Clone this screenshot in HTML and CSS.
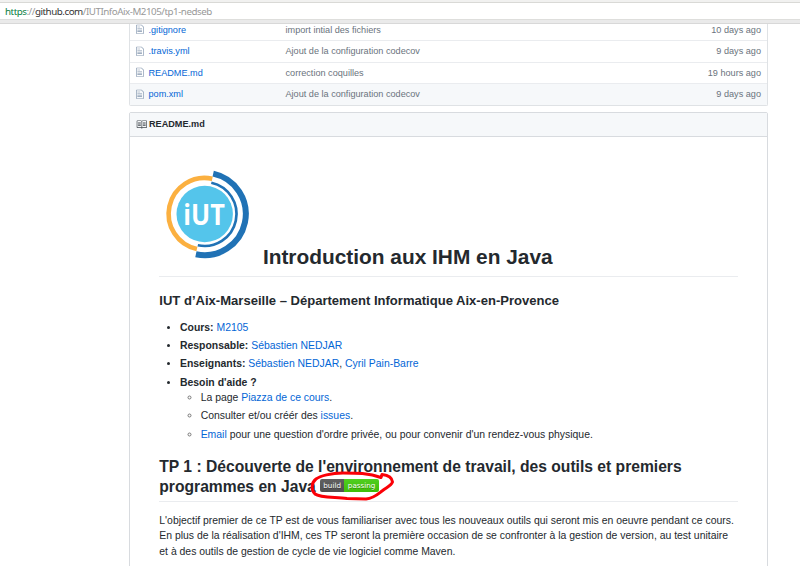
FILE: index.html
```html
<!DOCTYPE html>
<html lang="fr">
<head>
<meta charset="utf-8">
<title>tp1-nedseb</title>
<link rel="stylesheet" href="styles.css">
</head>
<body>
<svg class="defs" width="0" height="0"><defs>
<symbol id="file" viewBox="0 0 12 16"><path fill-rule="evenodd" d="M6 5H2V4h4v1zM2 8h7V7H2v1zm0 2h7V9H2v1zm0 2h7v-1H2v1zm10-7.500V14c0 .55-.45 1-1 1H1c-.55 0-1-.45-1-1V2c0-.55.45-1 1-1h7.500L12 4.500zM11 5L8 2H1v12h10V5z"/></symbol>
</defs></svg>
<header class="address"><span class="secure">https</span>://<span class="host">github.com</span>/IUTInfoAix-M2105/tp1-nedseb</header>
<main class="container">
  <div class="files">
    <div class="row"><svg class="icon"><use href="#file"/></svg><a class="name">.gitignore</a><span class="message">import intial des fichiers</span><span class="age">10 days ago</span></div>
    <div class="row"><svg class="icon"><use href="#file"/></svg><a class="name">.travis.yml</a><span class="message">Ajout de la configuration codecov</span><span class="age">9 days ago</span></div>
    <div class="row"><svg class="icon"><use href="#file"/></svg><a class="name">README.md</a><span class="message">correction coquilles</span><span class="age">19 hours ago</span></div>
    <div class="row current"><svg class="icon"><use href="#file"/></svg><a class="name">pom.xml</a><span class="message">Ajout de la configuration codecov</span><span class="age">9 days ago</span></div>
  </div>
  <section class="readme">
    <div class="readme-title"><svg class="book" viewBox="0 0 16 16"><path fill-rule="evenodd" d="M3 5h4v1H3V5zm0 3h4V7H3v1zm0 2h4V9H3v1zm11-5h-4v1h4V5zm0 2h-4v1h4V7zm0 2h-4v1h4V9zm2-6v9c0 .55-.45 1-1 1H9.500l-1 1-1-1H2c-.55 0-1-.45-1-1V3c0-.55.45-1 1-1h5.500l1 1 1-1H15c.55 0 1 .45 1 1zm-8 .5L7.500 3H2v9h6V3.500zm7-.5H9.500l-.5.500V12h6V3z"/></svg>README.md</div>
    <article class="markdown">
      <h1><svg class="logo" viewBox="0 0 97.8 97.8">
        <circle cx="45.700" cy="48" r="28.200" fill="#54c5eb"/>
        <path d="M53.300 12.800A35.500 35.500 0 0 0 37.900 83.100" fill="none" stroke="#fbb040" stroke-width="4.600"/>
        <path d="M54.200 7.600A41 41 0 0 1 36.900 88.300" fill="none" stroke="#2072b5" stroke-width="6"/>
        <path d="M52.300 16.700A31.500 31.500 0 0 1 38.800 79.200" fill="none" stroke="#2072b5" stroke-width="2.700"/>
        <text class="logo-text" x="24.300" y="58.600" textLength="41.500" lengthAdjust="spacingAndGlyphs">iUT</text>
      </svg> Introduction aux IHM en Java</h1>
      <h3>IUT d’Aix-Marseille – Département Informatique Aix-en-Provence</h3>
      <ul>
        <li><strong>Cours:</strong> <a>M2105</a></li>
        <li><strong>Responsable:</strong> <a>Sébastien NEDJAR</a></li>
        <li><strong>Enseignants:</strong> <a>Sébastien NEDJAR</a>, <a>Cyril Pain-Barre</a></li>
        <li><strong>Besoin d'aide ?</strong>
          <ul>
            <li>La page <a>Piazza de ce cours</a>.</li>
            <li>Consulter et/ou créér des <a>issues</a>.</li>
            <li><a>Email</a> pour une question d'ordre privée, ou pour convenir d'un rendez-vous physique.</li>
          </ul>
        </li>
      </ul>
      <h2>TP 1 : Découverte de l'environnement de travail, des outils et premiers<br>programmes en Java <span class="badge-wrap"><span class="badge"><span class="subject">build</span><span class="status">passing</span></span><svg class="scribble" viewBox="0 0 88 34"><path d="M72 8.500C60 4 47 4 34 4C22 4 11 7 7 10C2 14 2 21 6 25C11 29 26 28 38 29.500L57 30C65 29 69 25 73 22C78 18 82 17 83.500 13C83 8 78 6 73 5.500L72 8.500"/></svg></span></h2>
      <p>L'objectif premier de ce TP est de vous familiariser avec tous les nouveaux outils qui seront mis en oeuvre pendant ce cours.<br>En plus de la réalisation d'IHM, ces TP seront la première occasion de se confronter à la gestion de version, au test unitaire<br>et à des outils de gestion de cycle de vie logiciel comme Maven.</p>
    </article>
  </section>
</main>
</body>
</html>
```
FILE: styles.css
```css
* { box-sizing: border-box; }
body {
  margin: 0;
  height: 566px;
  overflow: hidden;
  background: #fff;
  color: #24292e;
  font: 10.43px/15.65px "Liberation Sans", Arial, sans-serif;
}
a { color: #0366d6; }
.defs { position: absolute; }
.address {
  height: 24px;
  padding: 3px 5px 0;
  background: linear-gradient(#f1f1f0 2px, #d9d9d6 2px 3px, #fff 3px 19px, #dededc 19px 20px, #eaeaea 20px 23px, #d8d8d8 23px);
  font: 9.8px/17px "Noto Sans", sans-serif;
  letter-spacing: -.48px;
  color: #999;
  white-space: nowrap;
}
.secure { color: #0b8043; }
.host { color: #333; }
.container { width: 639px; margin-left: 129px; }
.files {
  height: 81.5px;
  border: 1px solid #dfe2e5;
  border-top: 0;
  border-radius: 0 0 2px 2px;
  display: flex;
  flex-direction: column;
  justify-content: flex-end;
  overflow: hidden;
  font-size: 9.13px;
}
.row {
  display: flex;
  flex: none;
  align-items: center;
  height: 21.5px;
  padding: 2px 6px 0;
  border-top: 1px solid #eaecef;
  color: #6a737d;
}
.row.current { background: #f6f8fa; }
.icon { width: 8px; height: 10.5px; margin: -3px 4.5px 0 0; fill: #8295ad; }
.name { width: 137px; }
.age { margin-left: auto; }
.readme {
  margin-top: 6px;
  border: 1px solid #d8dbdf;
  border-radius: 2px 2px 0 0;
}
.readme-title {
  display: flex;
  align-items: center;
  height: 24.3px;
  padding: 1px 0 0 6px;
  background: #f6f8fa;
  border-bottom: 1px solid #d8dbdf;
  font-size: 9.13px;
  font-weight: 700;
}
.book { width: 11px; height: 11px; margin: -1px 2px 0 0; fill: #444a50; }
.markdown { padding: 29px 29.3px; }
h1, h2, h3 { margin: 15.65px 0 10.43px; line-height: 1.25; white-space: nowrap; }
h1, h2 { padding-bottom: .3em; border-bottom: 1px solid #eaecef; }
h1 { margin-top: 0; padding-bottom: 5.9px; font-size: 20.86px; }
h2 { margin: 14.8px 0 11.1px; padding-bottom: 4.3px; font-size: 15.65px; }
h3 { margin: 16.1px 0 10.8px; font-size: 13.06px; }
.logo { width: 97.8px; height: 97.8px; vertical-align: baseline; }
.logo-text { font: 700 28px "Open Sans", sans-serif; fill: #fff; }
ul { margin: 0 0 10.43px; padding-left: 20.7px; }
ul ul { margin: 0; }
ul ul li::marker { color: #777; }
li + li { margin-top: 2.61px; }
p { margin: 0; white-space: nowrap; }
.badge-wrap {
  position: relative;
  display: inline-block;
  height: 13px;
  line-height: 13px;
  vertical-align: 3.5px;
}
.badge {
  display: flex;
  width: 59px;
  height: 13px;
  overflow: hidden;
  border-radius: 2px;
  font: 7.2px/13px "DejaVu Sans", sans-serif;
  color: #fff;
}
.subject, .status { text-align: center; text-shadow: 0 1px rgba(0, 0, 0, .3); }
.subject { width: 24px; background: linear-gradient(#606060, #505050); }
.status { flex: 1; background: linear-gradient(#50cf20, #40bd08); }
.scribble { position: absolute; left: -11px; top: -10px; width: 88px; height: 34px; }
.scribble path { fill: none; stroke: #fb0007; stroke-width: 3; stroke-linecap: round; stroke-linejoin: round; }
```
